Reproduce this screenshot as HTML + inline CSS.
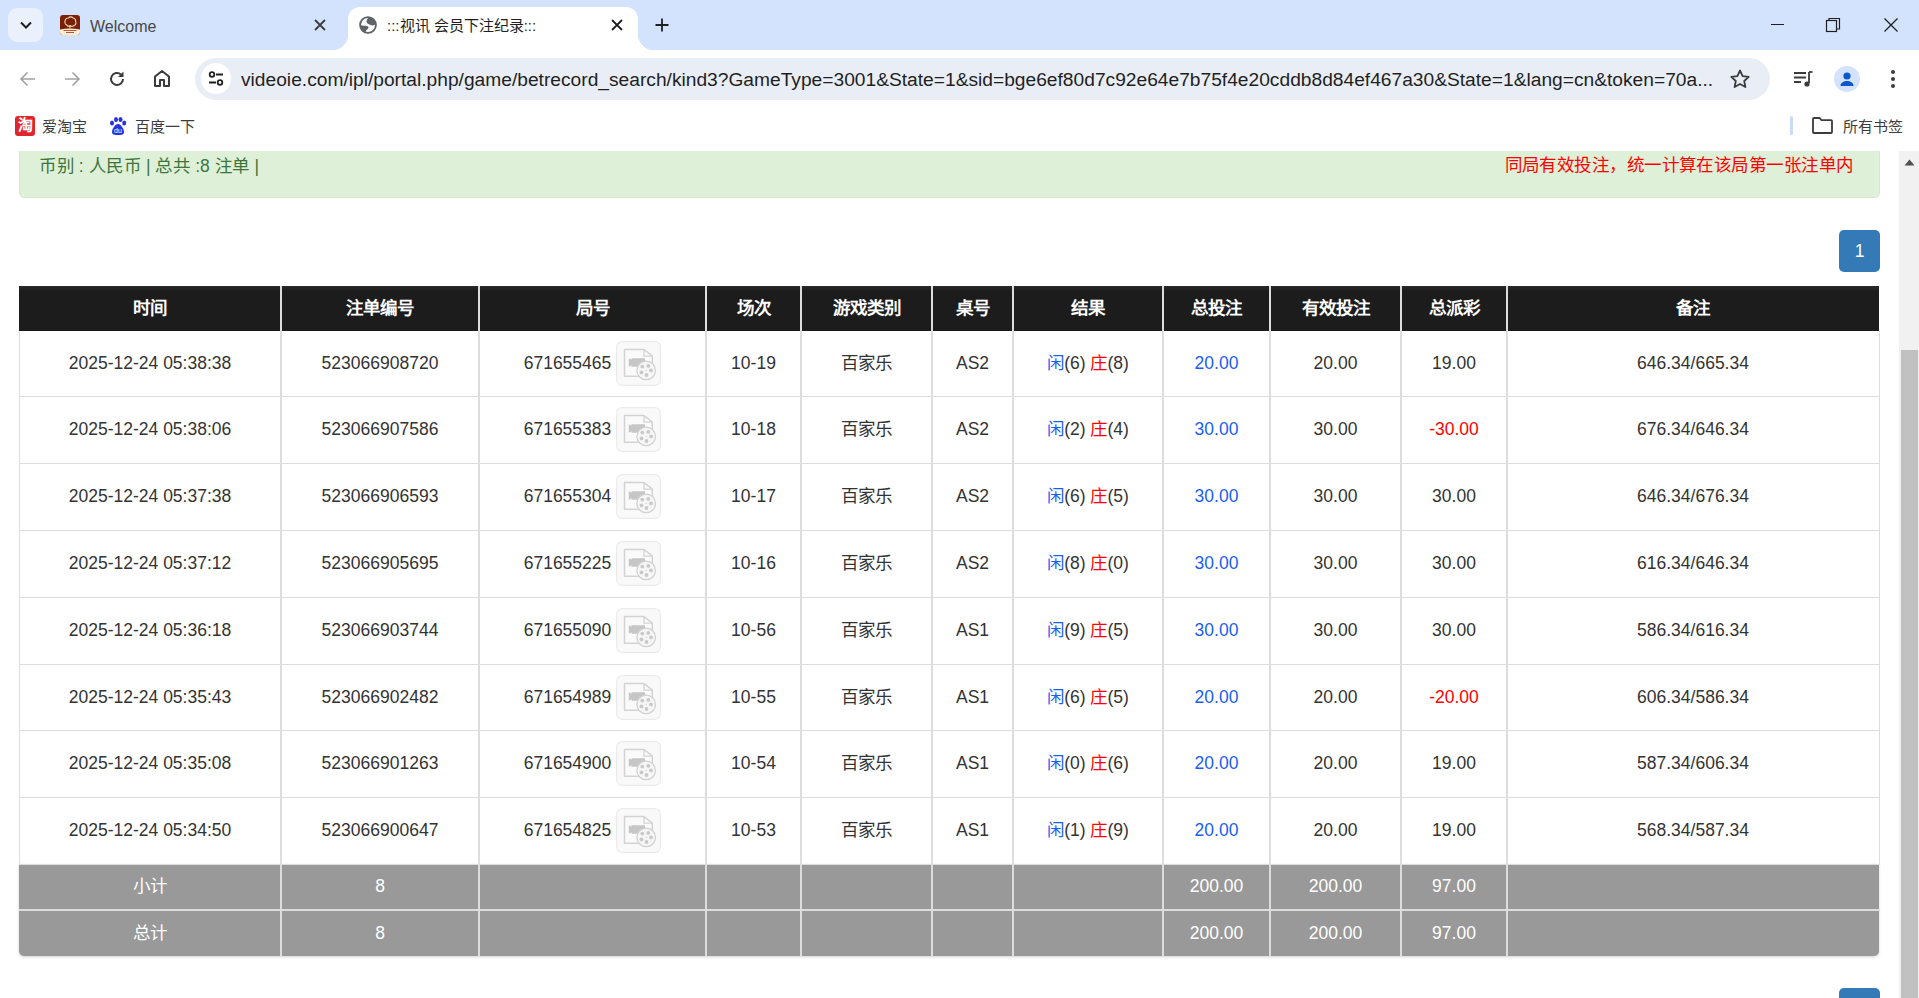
<!DOCTYPE html>
<html lang="zh-CN"><head><meta charset="utf-8"><title>:::视讯 会员下注纪录:::</title>
<style>
*{box-sizing:border-box;margin:0;padding:0}
html,body{text-spacing-trim:space-all;width:1919px;height:998px;overflow:hidden;background:#fff;font-family:"Liberation Sans",sans-serif;position:relative}
.a{position:absolute}
.tabstrip{left:0;top:0;width:1919px;height:50px;background:#d3e3fd}
.toolbar{left:0;top:50px;width:1919px;height:101px;background:#fff;border-top-left-radius:10px}
.omni{left:195px;top:58px;width:1575px;height:42px;border-radius:21px;background:#e9eef6}
.url{left:241px;top:68.5px;font-size:19.2px;color:#1f1f1f;white-space:nowrap;letter-spacing:0px}
.ttl{font-size:15px;color:#1f1f1f;white-space:nowrap}
.bm{font-size:15px;color:#1f1f1f;white-space:nowrap}
.cell{position:absolute;display:flex;line-height:25px;align-items:center;justify-content:center;font-size:17.5px;color:#333;white-space:nowrap}
.hd{color:#fff;font-weight:bold;background:linear-gradient(#2b2b2b,#1c1c1c 5px)}
.ft{color:#fff;background:#999}
.vb{position:absolute;width:2px;background:#ddd}
.hb{position:absolute;height:1px;background:#ddd}
.ico{display:inline-block;width:45px;height:45px;margin-left:5px;position:relative}
.ico svg{display:block}
.bl{color:#1a5ff0}.rd{color:#f00}
</style></head><body>

<div class="a tabstrip"></div>
<div class="a" style="left:8px;top:8px;width:35px;height:34px;border-radius:9px;background:#eaf1fd"></div>
<svg class="a" style="left:18px;top:18px" width="16" height="14" viewBox="0 0 16 14"><path d="M3 4.5L8 9.5L13 4.5" fill="none" stroke="#1f1f1f" stroke-width="2"/></svg>
<svg class="a" style="left:60px;top:15px" width="20" height="20" viewBox="0 0 20 20"><rect x="0" y="0" width="20" height="20" rx="3" fill="#7a1f08"/><path d="M0 14.5Q10 12.5 20 14.5V17a3 3 0 0 1-3 3H3a3 3 0 0 1-3-3z" fill="#fbeed0"/><path d="M5 6.5c0-2 1.5-3.5 3.5-3.5 1-1.5 3.5-1.5 4.5 0 2 .3 3 2 2.6 3.8.8 1.2.3 3-1.3 3.4-.8 1.2-2.6 1.5-3.6.6-1.2.7-3 .5-3.8-.7C5.7 9.7 4.6 8 5 6.5z" fill="none" stroke="#f3d9b8" stroke-width="1.1"/><path d="M10 10v3.5" stroke="#f3d9b8" stroke-width="1"/><path d="M3.5 15.5h13M6 17.5h8" stroke="#c0392b" stroke-width="0.9"/></svg>
<div class="a ttl" style="left:90px;top:18px;color:#474747;font-size:16px">Welcome</div>
<svg class="a" style="left:313px;top:18px" width="14" height="14" viewBox="0 0 14 14"><path d="M2 2L12 12M12 2L2 12" stroke="#3c3c3c" stroke-width="1.8"/></svg>
<div class="a" style="left:348px;top:7px;width:290px;height:50px;background:#fff;border-radius:12px 12px 0 0"></div>
<div class="a" style="left:332px;top:34px;width:16px;height:16px;background:radial-gradient(circle at 0 0,#d3e3fd 16px,#fff 16.5px)"></div>
<div class="a" style="left:638px;top:34px;width:16px;height:16px;background:radial-gradient(circle at 16px 0,#d3e3fd 16px,#fff 16.5px)"></div>
<svg class="a" style="left:359px;top:16px" width="18" height="18" viewBox="0 0 18 18"><circle cx="9" cy="9" r="7.9" fill="none" stroke="#5f6368" stroke-width="1.9"/><path d="M10.2 1.1C8.2 2.4 7.2 4.8 7.6 6.2C8 7.5 9.5 7.9 11 8.8C12.5 9.8 15 9.8 16.9 8.1A8 8 0 0 0 10.2 1.1Z" fill="#5f6368"/><path d="M1.1 9C3.5 9.8 7 9.5 8.6 10.3C9.8 11 9.9 12.3 8.5 13.2C7 14 6.5 15 6.6 16.8A8 8 0 0 1 1.1 9Z" fill="#5f6368"/></svg>
<div class="a ttl" style="left:387px;top:14px">:::视讯 会员下注纪录:::</div>
<svg class="a" style="left:610px;top:18px" width="14" height="14" viewBox="0 0 14 14"><path d="M2 2L12 12M12 2L2 12" stroke="#1f1f1f" stroke-width="1.8"/></svg>
<svg class="a" style="left:654px;top:17px" width="16" height="16" viewBox="0 0 16 16"><path d="M8 1.5V14.5M1.5 8H14.5" stroke="#1f1f1f" stroke-width="1.8"/></svg>
<div class="a" style="left:1771px;top:24px;width:13px;height:1px;background:#1f1f1f"></div>
<svg class="a" style="left:1825px;top:17px" width="16" height="16" viewBox="0 0 16 16"><rect x="1.5" y="3.5" width="10" height="11" fill="none" stroke="#1f1f1f" stroke-width="1.2"/><path d="M4 3.5V1.5H14.5V12H11.5" fill="none" stroke="#1f1f1f" stroke-width="1.2"/></svg>
<svg class="a" style="left:1883px;top:17px" width="16" height="16" viewBox="0 0 16 16"><path d="M1.5 1.5L14.5 14.5M14.5 1.5L1.5 14.5" stroke="#1f1f1f" stroke-width="1.3"/></svg>
<div class="a toolbar"></div>
<svg class="a" style="left:18px;top:69px" width="20" height="20" viewBox="0 0 20 20"><path d="M17 10H3.5M9.5 3.5L3 10l6.5 6.5" fill="none" stroke="#a3a3a3" stroke-width="1.6"/></svg>
<svg class="a" style="left:62px;top:69px" width="20" height="20" viewBox="0 0 20 20"><path d="M3 10H16.5M10.5 3.5L17 10l-6.5 6.5" fill="none" stroke="#a3a3a3" stroke-width="1.6"/></svg>
<svg class="a" style="left:107px;top:69px" width="20" height="20" viewBox="0 0 20 20"><path d="M16 10a6 6 0 1 1-2-4.5" fill="none" stroke="#3c3c3c" stroke-width="2"/><path d="M16.5 2.5v5.5h-5.5z" fill="#3c3c3c"/></svg>
<svg class="a" style="left:152px;top:68px" width="20" height="20" viewBox="0 0 20 20"><path d="M3 18V8.5L10 3l7 5.5V18h-5v-6H8v6z" fill="none" stroke="#3c3c3c" stroke-width="2" stroke-linejoin="round"/></svg>
<div class="a omni"></div>
<div class="a" style="left:201px;top:63px;width:30px;height:31px;border-radius:50%;background:#fff"></div>
<svg class="a" style="left:206px;top:69px" width="20" height="20" viewBox="0 0 20 20"><circle cx="6" cy="5.5" r="2.3" fill="none" stroke="#1f1f1f" stroke-width="1.8"/><path d="M10 5.5H17M3 13.5H10" stroke="#1f1f1f" stroke-width="1.8"/><circle cx="14" cy="13.5" r="2.3" fill="none" stroke="#1f1f1f" stroke-width="1.8"/></svg>
<div class="a url">videoie.com/ipl/portal.php/game/betrecord_search/kind3?GameType=3001&amp;State=1&amp;sid=bge6ef80d7c92e64e7b75f4e20cddb8d84ef467a30&amp;State=1&amp;lang=cn&amp;token=70a...</div>
<svg class="a" style="left:1729px;top:68px" width="22" height="22" viewBox="0 0 22 22"><path d="M11 2.5l2.6 5.6 6.1.7-4.5 4.2 1.2 6-5.4-3-5.4 3 1.2-6-4.5-4.2 6.1-.7z" fill="none" stroke="#3c3c3c" stroke-width="1.8" stroke-linejoin="round"/></svg>
<svg class="a" style="left:1792px;top:68px" width="22" height="22" viewBox="0 0 22 22"><path d="M2 5H14M2 9.5H14M2 14H9" stroke="#3c3c3c" stroke-width="1.8"/><path d="M17 4V15" stroke="#3c3c3c" stroke-width="1.8"/><path d="M17 4H20.5" stroke="#3c3c3c" stroke-width="1.8"/><circle cx="15" cy="16" r="2.6" fill="#3c3c3c"/></svg>
<div class="a" style="left:1834px;top:66px;width:26px;height:26px;border-radius:50%;background:#d3e3fd"></div>
<svg class="a" style="left:1838px;top:70px" width="18" height="18" viewBox="0 0 18 18"><circle cx="9" cy="6" r="3.6" fill="#0b57d0"/><path d="M2.5 16c0-3.3 3.3-5 6.5-5s6.5 1.7 6.5 5z" fill="#0b57d0"/></svg>
<svg class="a" style="left:1883px;top:68px" width="20" height="22" viewBox="0 0 20 22"><circle cx="10" cy="4" r="2" fill="#3c3c3c"/><circle cx="10" cy="11" r="2" fill="#3c3c3c"/><circle cx="10" cy="18" r="2" fill="#3c3c3c"/></svg>
<div class="a" style="left:15px;top:116px;width:20px;height:20px;border-radius:3px;background:#e0262c"></div>
<div class="a" style="left:15px;top:113px;width:20px;font-size:15px;color:#fff;font-weight:bold;text-align:center">淘</div>
<div class="a bm" style="left:42px;top:115px;color:#3c3c3c">爱淘宝</div>
<svg class="a" style="left:108px;top:116px" width="20" height="20" viewBox="0 0 20 20"><ellipse cx="4" cy="7" rx="2" ry="2.5" fill="#2932e1"/><ellipse cx="8" cy="3.5" rx="2" ry="2.5" fill="#2932e1"/><ellipse cx="12.5" cy="3.5" rx="2" ry="2.5" fill="#2932e1"/><ellipse cx="16.2" cy="7" rx="2" ry="2.5" fill="#2932e1"/><path d="M10 8c-3 0-6 5-6 8s3 3 6 3 6 0 6-3-3-8-6-8z" fill="#2932e1"/><text x="10" y="17" font-size="7" fill="#fff" text-anchor="middle" font-family="Liberation Sans">du</text></svg>
<div class="a bm" style="left:135px;top:115px;color:#3c3c3c">百度一下</div>
<div class="a" style="left:1790px;top:116px;width:3px;height:19px;border-radius:2px;background:#c9dafb"></div>
<svg class="a" style="left:1812px;top:117px" width="21" height="17" viewBox="0 0 21 17"><path d="M1 2a1 1 0 0 1 1-1h5.5l2 2.2h9.5a1 1 0 0 1 1 1V15a1 1 0 0 1-1 1H2a1 1 0 0 1-1-1z" fill="none" stroke="#3c3c3c" stroke-width="1.8"/></svg>
<div class="a bm" style="left:1843px;top:115px;color:#3c3c3c">所有书签</div>
<div class="a" style="left:0;top:151px;width:1899px;height:847px;overflow:hidden;background:#fff">
<div class="a" style="left:19px;top:-10px;width:1861px;height:57px;background:#dff0d8;border:1px solid #d6e9c6;border-radius:5px"></div>
<div class="a" style="left:39px;top:1px;font-size:17.5px;color:#3c763d;white-space:nowrap"><span style="letter-spacing:.5px">币别</span> : <span style="letter-spacing:.5px">人民币</span> | <span style="letter-spacing:.5px">总共</span> :8 <span style="letter-spacing:.5px">注单</span> |</div>
<div class="a" style="right:45.5px;top:0px;font-size:17.5px;color:#f00;white-space:nowrap;letter-spacing:0.45px">同局有效投注，统一计算在该局第一张注单内</div>
<div class="a" style="left:1839px;top:79px;width:41px;height:42px;border-radius:5px;background:#337ab7;color:#fff;font-size:17.5px;display:flex;align-items:center;justify-content:center">1</div>
<div class="a" style="left:1839px;top:837px;width:41px;height:42px;border-radius:5px;background:#337ab7"></div>
<div class="a" style="left:19px;top:713px;width:1860px;height:92px;border-radius:0 0 5px 5px;box-shadow:0 1px 3px rgba(0,0,0,.18);background:#999"></div>
<div class="cell hd" style="left:19px;top:135px;width:262px;height:45px"><span>时间</span></div>
<div class="cell hd" style="left:281px;top:135px;width:198px;height:45px"><span>注单编号</span></div>
<div class="cell hd" style="left:479px;top:135px;width:227px;height:45px"><span>局号</span></div>
<div class="cell hd" style="left:706px;top:135px;width:95px;height:45px"><span>场次</span></div>
<div class="cell hd" style="left:801px;top:135px;width:131px;height:45px"><span>游戏类别</span></div>
<div class="cell hd" style="left:932px;top:135px;width:81px;height:45px"><span>桌号</span></div>
<div class="cell hd" style="left:1013px;top:135px;width:150px;height:45px"><span>结果</span></div>
<div class="cell hd" style="left:1163px;top:135px;width:107px;height:45px"><span>总投注</span></div>
<div class="cell hd" style="left:1270px;top:135px;width:131px;height:45px"><span>有效投注</span></div>
<div class="cell hd" style="left:1401px;top:135px;width:106px;height:45px"><span>总派彩</span></div>
<div class="cell hd" style="left:1507px;top:135px;width:372px;height:45px"><span>备注</span></div>
<div class="cell" style="left:19px;top:180px;width:262px;height:65px"><span>2025-12-24 05:38:38</span></div>
<div class="cell" style="left:281px;top:180px;width:198px;height:65px"><span>523066908720</span></div>
<div class="cell" style="left:479px;top:180px;width:227px;height:65px"><span><span style="display:inline-flex;align-items:center">671655465<span class="ico"><svg width="45" height="45" viewBox="0 0 45 45"><rect x="0.6" y="0.6" width="43.8" height="43.8" rx="5.5" fill="#f9f9f9" stroke="#ececec" stroke-width="1.2"/><path d="M8.5 8.5H28L36.3 15.2V35.3H8.5Z" fill="#fafafa" stroke="#d3d3d3" stroke-width="1.5" stroke-linejoin="round"/><path d="M28 8.5V15.2H36.3" fill="none" stroke="#d3d3d3" stroke-width="1.3"/><path d="M12.8 17.3L15.5 18.8V17.3H29V25.7H15.5V24.2L12.8 25.7Z" fill="#c6c6c6"/><circle cx="30.2" cy="29.4" r="9.3" fill="#f6f6f6" stroke="#d2d2d2" stroke-width="1.3"/><circle cx="26.3" cy="25.6" r="1.9" fill="#c9c9c9"/><circle cx="32.3" cy="24.9" r="1.9" fill="#c9c9c9"/><circle cx="35" cy="29.4" r="1.9" fill="#c9c9c9"/><circle cx="25.5" cy="31.4" r="1.9" fill="#c9c9c9"/><circle cx="30.5" cy="34" r="1.9" fill="#c9c9c9"/><circle cx="30.2" cy="29.4" r="0.6" fill="#c9c9c9"/></svg></span></span></span></div>
<div class="cell" style="left:706px;top:180px;width:95px;height:65px"><span>10-19</span></div>
<div class="cell" style="left:801px;top:180px;width:131px;height:65px"><span>百家乐</span></div>
<div class="cell" style="left:932px;top:180px;width:81px;height:65px"><span>AS2</span></div>
<div class="cell" style="left:1013px;top:180px;width:150px;height:65px"><span><span class="bl">闲</span>(6) <span class="rd">庄</span>(8)</span></div>
<div class="cell" style="left:1163px;top:180px;width:107px;height:65px"><span><span class="bl">20.00</span></span></div>
<div class="cell" style="left:1270px;top:180px;width:131px;height:65px"><span>20.00</span></div>
<div class="cell" style="left:1401px;top:180px;width:106px;height:65px"><span>19.00</span></div>
<div class="cell" style="left:1507px;top:180px;width:372px;height:65px"><span>646.34/665.34</span></div>
<div class="hb" style="left:19px;top:245px;width:1861px"></div>
<div class="cell" style="left:19px;top:245px;width:262px;height:67px"><span>2025-12-24 05:38:06</span></div>
<div class="cell" style="left:281px;top:245px;width:198px;height:67px"><span>523066907586</span></div>
<div class="cell" style="left:479px;top:245px;width:227px;height:67px"><span><span style="display:inline-flex;align-items:center">671655383<span class="ico"><svg width="45" height="45" viewBox="0 0 45 45"><rect x="0.6" y="0.6" width="43.8" height="43.8" rx="5.5" fill="#f9f9f9" stroke="#ececec" stroke-width="1.2"/><path d="M8.5 8.5H28L36.3 15.2V35.3H8.5Z" fill="#fafafa" stroke="#d3d3d3" stroke-width="1.5" stroke-linejoin="round"/><path d="M28 8.5V15.2H36.3" fill="none" stroke="#d3d3d3" stroke-width="1.3"/><path d="M12.8 17.3L15.5 18.8V17.3H29V25.7H15.5V24.2L12.8 25.7Z" fill="#c6c6c6"/><circle cx="30.2" cy="29.4" r="9.3" fill="#f6f6f6" stroke="#d2d2d2" stroke-width="1.3"/><circle cx="26.3" cy="25.6" r="1.9" fill="#c9c9c9"/><circle cx="32.3" cy="24.9" r="1.9" fill="#c9c9c9"/><circle cx="35" cy="29.4" r="1.9" fill="#c9c9c9"/><circle cx="25.5" cy="31.4" r="1.9" fill="#c9c9c9"/><circle cx="30.5" cy="34" r="1.9" fill="#c9c9c9"/><circle cx="30.2" cy="29.4" r="0.6" fill="#c9c9c9"/></svg></span></span></span></div>
<div class="cell" style="left:706px;top:245px;width:95px;height:67px"><span>10-18</span></div>
<div class="cell" style="left:801px;top:245px;width:131px;height:67px"><span>百家乐</span></div>
<div class="cell" style="left:932px;top:245px;width:81px;height:67px"><span>AS2</span></div>
<div class="cell" style="left:1013px;top:245px;width:150px;height:67px"><span><span class="bl">闲</span>(2) <span class="rd">庄</span>(4)</span></div>
<div class="cell" style="left:1163px;top:245px;width:107px;height:67px"><span><span class="bl">30.00</span></span></div>
<div class="cell" style="left:1270px;top:245px;width:131px;height:67px"><span>30.00</span></div>
<div class="cell" style="left:1401px;top:245px;width:106px;height:67px"><span><span class="rd">-30.00</span></span></div>
<div class="cell" style="left:1507px;top:245px;width:372px;height:67px"><span>676.34/646.34</span></div>
<div class="hb" style="left:19px;top:312px;width:1861px"></div>
<div class="cell" style="left:19px;top:312px;width:262px;height:67px"><span>2025-12-24 05:37:38</span></div>
<div class="cell" style="left:281px;top:312px;width:198px;height:67px"><span>523066906593</span></div>
<div class="cell" style="left:479px;top:312px;width:227px;height:67px"><span><span style="display:inline-flex;align-items:center">671655304<span class="ico"><svg width="45" height="45" viewBox="0 0 45 45"><rect x="0.6" y="0.6" width="43.8" height="43.8" rx="5.5" fill="#f9f9f9" stroke="#ececec" stroke-width="1.2"/><path d="M8.5 8.5H28L36.3 15.2V35.3H8.5Z" fill="#fafafa" stroke="#d3d3d3" stroke-width="1.5" stroke-linejoin="round"/><path d="M28 8.5V15.2H36.3" fill="none" stroke="#d3d3d3" stroke-width="1.3"/><path d="M12.8 17.3L15.5 18.8V17.3H29V25.7H15.5V24.2L12.8 25.7Z" fill="#c6c6c6"/><circle cx="30.2" cy="29.4" r="9.3" fill="#f6f6f6" stroke="#d2d2d2" stroke-width="1.3"/><circle cx="26.3" cy="25.6" r="1.9" fill="#c9c9c9"/><circle cx="32.3" cy="24.9" r="1.9" fill="#c9c9c9"/><circle cx="35" cy="29.4" r="1.9" fill="#c9c9c9"/><circle cx="25.5" cy="31.4" r="1.9" fill="#c9c9c9"/><circle cx="30.5" cy="34" r="1.9" fill="#c9c9c9"/><circle cx="30.2" cy="29.4" r="0.6" fill="#c9c9c9"/></svg></span></span></span></div>
<div class="cell" style="left:706px;top:312px;width:95px;height:67px"><span>10-17</span></div>
<div class="cell" style="left:801px;top:312px;width:131px;height:67px"><span>百家乐</span></div>
<div class="cell" style="left:932px;top:312px;width:81px;height:67px"><span>AS2</span></div>
<div class="cell" style="left:1013px;top:312px;width:150px;height:67px"><span><span class="bl">闲</span>(6) <span class="rd">庄</span>(5)</span></div>
<div class="cell" style="left:1163px;top:312px;width:107px;height:67px"><span><span class="bl">30.00</span></span></div>
<div class="cell" style="left:1270px;top:312px;width:131px;height:67px"><span>30.00</span></div>
<div class="cell" style="left:1401px;top:312px;width:106px;height:67px"><span>30.00</span></div>
<div class="cell" style="left:1507px;top:312px;width:372px;height:67px"><span>646.34/676.34</span></div>
<div class="hb" style="left:19px;top:379px;width:1861px"></div>
<div class="cell" style="left:19px;top:379px;width:262px;height:67px"><span>2025-12-24 05:37:12</span></div>
<div class="cell" style="left:281px;top:379px;width:198px;height:67px"><span>523066905695</span></div>
<div class="cell" style="left:479px;top:379px;width:227px;height:67px"><span><span style="display:inline-flex;align-items:center">671655225<span class="ico"><svg width="45" height="45" viewBox="0 0 45 45"><rect x="0.6" y="0.6" width="43.8" height="43.8" rx="5.5" fill="#f9f9f9" stroke="#ececec" stroke-width="1.2"/><path d="M8.5 8.5H28L36.3 15.2V35.3H8.5Z" fill="#fafafa" stroke="#d3d3d3" stroke-width="1.5" stroke-linejoin="round"/><path d="M28 8.5V15.2H36.3" fill="none" stroke="#d3d3d3" stroke-width="1.3"/><path d="M12.8 17.3L15.5 18.8V17.3H29V25.7H15.5V24.2L12.8 25.7Z" fill="#c6c6c6"/><circle cx="30.2" cy="29.4" r="9.3" fill="#f6f6f6" stroke="#d2d2d2" stroke-width="1.3"/><circle cx="26.3" cy="25.6" r="1.9" fill="#c9c9c9"/><circle cx="32.3" cy="24.9" r="1.9" fill="#c9c9c9"/><circle cx="35" cy="29.4" r="1.9" fill="#c9c9c9"/><circle cx="25.5" cy="31.4" r="1.9" fill="#c9c9c9"/><circle cx="30.5" cy="34" r="1.9" fill="#c9c9c9"/><circle cx="30.2" cy="29.4" r="0.6" fill="#c9c9c9"/></svg></span></span></span></div>
<div class="cell" style="left:706px;top:379px;width:95px;height:67px"><span>10-16</span></div>
<div class="cell" style="left:801px;top:379px;width:131px;height:67px"><span>百家乐</span></div>
<div class="cell" style="left:932px;top:379px;width:81px;height:67px"><span>AS2</span></div>
<div class="cell" style="left:1013px;top:379px;width:150px;height:67px"><span><span class="bl">闲</span>(8) <span class="rd">庄</span>(0)</span></div>
<div class="cell" style="left:1163px;top:379px;width:107px;height:67px"><span><span class="bl">30.00</span></span></div>
<div class="cell" style="left:1270px;top:379px;width:131px;height:67px"><span>30.00</span></div>
<div class="cell" style="left:1401px;top:379px;width:106px;height:67px"><span>30.00</span></div>
<div class="cell" style="left:1507px;top:379px;width:372px;height:67px"><span>616.34/646.34</span></div>
<div class="hb" style="left:19px;top:446px;width:1861px"></div>
<div class="cell" style="left:19px;top:446px;width:262px;height:67px"><span>2025-12-24 05:36:18</span></div>
<div class="cell" style="left:281px;top:446px;width:198px;height:67px"><span>523066903744</span></div>
<div class="cell" style="left:479px;top:446px;width:227px;height:67px"><span><span style="display:inline-flex;align-items:center">671655090<span class="ico"><svg width="45" height="45" viewBox="0 0 45 45"><rect x="0.6" y="0.6" width="43.8" height="43.8" rx="5.5" fill="#f9f9f9" stroke="#ececec" stroke-width="1.2"/><path d="M8.5 8.5H28L36.3 15.2V35.3H8.5Z" fill="#fafafa" stroke="#d3d3d3" stroke-width="1.5" stroke-linejoin="round"/><path d="M28 8.5V15.2H36.3" fill="none" stroke="#d3d3d3" stroke-width="1.3"/><path d="M12.8 17.3L15.5 18.8V17.3H29V25.7H15.5V24.2L12.8 25.7Z" fill="#c6c6c6"/><circle cx="30.2" cy="29.4" r="9.3" fill="#f6f6f6" stroke="#d2d2d2" stroke-width="1.3"/><circle cx="26.3" cy="25.6" r="1.9" fill="#c9c9c9"/><circle cx="32.3" cy="24.9" r="1.9" fill="#c9c9c9"/><circle cx="35" cy="29.4" r="1.9" fill="#c9c9c9"/><circle cx="25.5" cy="31.4" r="1.9" fill="#c9c9c9"/><circle cx="30.5" cy="34" r="1.9" fill="#c9c9c9"/><circle cx="30.2" cy="29.4" r="0.6" fill="#c9c9c9"/></svg></span></span></span></div>
<div class="cell" style="left:706px;top:446px;width:95px;height:67px"><span>10-56</span></div>
<div class="cell" style="left:801px;top:446px;width:131px;height:67px"><span>百家乐</span></div>
<div class="cell" style="left:932px;top:446px;width:81px;height:67px"><span>AS1</span></div>
<div class="cell" style="left:1013px;top:446px;width:150px;height:67px"><span><span class="bl">闲</span>(9) <span class="rd">庄</span>(5)</span></div>
<div class="cell" style="left:1163px;top:446px;width:107px;height:67px"><span><span class="bl">30.00</span></span></div>
<div class="cell" style="left:1270px;top:446px;width:131px;height:67px"><span>30.00</span></div>
<div class="cell" style="left:1401px;top:446px;width:106px;height:67px"><span>30.00</span></div>
<div class="cell" style="left:1507px;top:446px;width:372px;height:67px"><span>586.34/616.34</span></div>
<div class="hb" style="left:19px;top:513px;width:1861px"></div>
<div class="cell" style="left:19px;top:513px;width:262px;height:66px"><span>2025-12-24 05:35:43</span></div>
<div class="cell" style="left:281px;top:513px;width:198px;height:66px"><span>523066902482</span></div>
<div class="cell" style="left:479px;top:513px;width:227px;height:66px"><span><span style="display:inline-flex;align-items:center">671654989<span class="ico"><svg width="45" height="45" viewBox="0 0 45 45"><rect x="0.6" y="0.6" width="43.8" height="43.8" rx="5.5" fill="#f9f9f9" stroke="#ececec" stroke-width="1.2"/><path d="M8.5 8.5H28L36.3 15.2V35.3H8.5Z" fill="#fafafa" stroke="#d3d3d3" stroke-width="1.5" stroke-linejoin="round"/><path d="M28 8.5V15.2H36.3" fill="none" stroke="#d3d3d3" stroke-width="1.3"/><path d="M12.8 17.3L15.5 18.8V17.3H29V25.7H15.5V24.2L12.8 25.7Z" fill="#c6c6c6"/><circle cx="30.2" cy="29.4" r="9.3" fill="#f6f6f6" stroke="#d2d2d2" stroke-width="1.3"/><circle cx="26.3" cy="25.6" r="1.9" fill="#c9c9c9"/><circle cx="32.3" cy="24.9" r="1.9" fill="#c9c9c9"/><circle cx="35" cy="29.4" r="1.9" fill="#c9c9c9"/><circle cx="25.5" cy="31.4" r="1.9" fill="#c9c9c9"/><circle cx="30.5" cy="34" r="1.9" fill="#c9c9c9"/><circle cx="30.2" cy="29.4" r="0.6" fill="#c9c9c9"/></svg></span></span></span></div>
<div class="cell" style="left:706px;top:513px;width:95px;height:66px"><span>10-55</span></div>
<div class="cell" style="left:801px;top:513px;width:131px;height:66px"><span>百家乐</span></div>
<div class="cell" style="left:932px;top:513px;width:81px;height:66px"><span>AS1</span></div>
<div class="cell" style="left:1013px;top:513px;width:150px;height:66px"><span><span class="bl">闲</span>(6) <span class="rd">庄</span>(5)</span></div>
<div class="cell" style="left:1163px;top:513px;width:107px;height:66px"><span><span class="bl">20.00</span></span></div>
<div class="cell" style="left:1270px;top:513px;width:131px;height:66px"><span>20.00</span></div>
<div class="cell" style="left:1401px;top:513px;width:106px;height:66px"><span><span class="rd">-20.00</span></span></div>
<div class="cell" style="left:1507px;top:513px;width:372px;height:66px"><span>606.34/586.34</span></div>
<div class="hb" style="left:19px;top:579px;width:1861px"></div>
<div class="cell" style="left:19px;top:579px;width:262px;height:67px"><span>2025-12-24 05:35:08</span></div>
<div class="cell" style="left:281px;top:579px;width:198px;height:67px"><span>523066901263</span></div>
<div class="cell" style="left:479px;top:579px;width:227px;height:67px"><span><span style="display:inline-flex;align-items:center">671654900<span class="ico"><svg width="45" height="45" viewBox="0 0 45 45"><rect x="0.6" y="0.6" width="43.8" height="43.8" rx="5.5" fill="#f9f9f9" stroke="#ececec" stroke-width="1.2"/><path d="M8.5 8.5H28L36.3 15.2V35.3H8.5Z" fill="#fafafa" stroke="#d3d3d3" stroke-width="1.5" stroke-linejoin="round"/><path d="M28 8.5V15.2H36.3" fill="none" stroke="#d3d3d3" stroke-width="1.3"/><path d="M12.8 17.3L15.5 18.8V17.3H29V25.7H15.5V24.2L12.8 25.7Z" fill="#c6c6c6"/><circle cx="30.2" cy="29.4" r="9.3" fill="#f6f6f6" stroke="#d2d2d2" stroke-width="1.3"/><circle cx="26.3" cy="25.6" r="1.9" fill="#c9c9c9"/><circle cx="32.3" cy="24.9" r="1.9" fill="#c9c9c9"/><circle cx="35" cy="29.4" r="1.9" fill="#c9c9c9"/><circle cx="25.5" cy="31.4" r="1.9" fill="#c9c9c9"/><circle cx="30.5" cy="34" r="1.9" fill="#c9c9c9"/><circle cx="30.2" cy="29.4" r="0.6" fill="#c9c9c9"/></svg></span></span></span></div>
<div class="cell" style="left:706px;top:579px;width:95px;height:67px"><span>10-54</span></div>
<div class="cell" style="left:801px;top:579px;width:131px;height:67px"><span>百家乐</span></div>
<div class="cell" style="left:932px;top:579px;width:81px;height:67px"><span>AS1</span></div>
<div class="cell" style="left:1013px;top:579px;width:150px;height:67px"><span><span class="bl">闲</span>(0) <span class="rd">庄</span>(6)</span></div>
<div class="cell" style="left:1163px;top:579px;width:107px;height:67px"><span><span class="bl">20.00</span></span></div>
<div class="cell" style="left:1270px;top:579px;width:131px;height:67px"><span>20.00</span></div>
<div class="cell" style="left:1401px;top:579px;width:106px;height:67px"><span>19.00</span></div>
<div class="cell" style="left:1507px;top:579px;width:372px;height:67px"><span>587.34/606.34</span></div>
<div class="hb" style="left:19px;top:646px;width:1861px"></div>
<div class="cell" style="left:19px;top:646px;width:262px;height:67px"><span>2025-12-24 05:34:50</span></div>
<div class="cell" style="left:281px;top:646px;width:198px;height:67px"><span>523066900647</span></div>
<div class="cell" style="left:479px;top:646px;width:227px;height:67px"><span><span style="display:inline-flex;align-items:center">671654825<span class="ico"><svg width="45" height="45" viewBox="0 0 45 45"><rect x="0.6" y="0.6" width="43.8" height="43.8" rx="5.5" fill="#f9f9f9" stroke="#ececec" stroke-width="1.2"/><path d="M8.5 8.5H28L36.3 15.2V35.3H8.5Z" fill="#fafafa" stroke="#d3d3d3" stroke-width="1.5" stroke-linejoin="round"/><path d="M28 8.5V15.2H36.3" fill="none" stroke="#d3d3d3" stroke-width="1.3"/><path d="M12.8 17.3L15.5 18.8V17.3H29V25.7H15.5V24.2L12.8 25.7Z" fill="#c6c6c6"/><circle cx="30.2" cy="29.4" r="9.3" fill="#f6f6f6" stroke="#d2d2d2" stroke-width="1.3"/><circle cx="26.3" cy="25.6" r="1.9" fill="#c9c9c9"/><circle cx="32.3" cy="24.9" r="1.9" fill="#c9c9c9"/><circle cx="35" cy="29.4" r="1.9" fill="#c9c9c9"/><circle cx="25.5" cy="31.4" r="1.9" fill="#c9c9c9"/><circle cx="30.5" cy="34" r="1.9" fill="#c9c9c9"/><circle cx="30.2" cy="29.4" r="0.6" fill="#c9c9c9"/></svg></span></span></span></div>
<div class="cell" style="left:706px;top:646px;width:95px;height:67px"><span>10-53</span></div>
<div class="cell" style="left:801px;top:646px;width:131px;height:67px"><span>百家乐</span></div>
<div class="cell" style="left:932px;top:646px;width:81px;height:67px"><span>AS1</span></div>
<div class="cell" style="left:1013px;top:646px;width:150px;height:67px"><span><span class="bl">闲</span>(1) <span class="rd">庄</span>(9)</span></div>
<div class="cell" style="left:1163px;top:646px;width:107px;height:67px"><span><span class="bl">20.00</span></span></div>
<div class="cell" style="left:1270px;top:646px;width:131px;height:67px"><span>20.00</span></div>
<div class="cell" style="left:1401px;top:646px;width:106px;height:67px"><span>19.00</span></div>
<div class="cell" style="left:1507px;top:646px;width:372px;height:67px"><span>568.34/587.34</span></div>
<div class="hb" style="left:19px;top:713px;width:1861px"></div>
<div class="cell ft" style="left:19px;top:713px;width:262px;height:45px;background:none">小计</div>
<div class="cell ft" style="left:281px;top:713px;width:198px;height:45px;background:none">8</div>
<div class="cell ft" style="left:479px;top:713px;width:227px;height:45px;background:none"></div>
<div class="cell ft" style="left:706px;top:713px;width:95px;height:45px;background:none"></div>
<div class="cell ft" style="left:801px;top:713px;width:131px;height:45px;background:none"></div>
<div class="cell ft" style="left:932px;top:713px;width:81px;height:45px;background:none"></div>
<div class="cell ft" style="left:1013px;top:713px;width:150px;height:45px;background:none"></div>
<div class="cell ft" style="left:1163px;top:713px;width:107px;height:45px;background:none">200.00</div>
<div class="cell ft" style="left:1270px;top:713px;width:131px;height:45px;background:none">200.00</div>
<div class="cell ft" style="left:1401px;top:713px;width:106px;height:45px;background:none">97.00</div>
<div class="cell ft" style="left:1507px;top:713px;width:372px;height:45px;background:none"></div>
<div class="cell ft" style="left:19px;top:760px;width:262px;height:45px;background:none">总计</div>
<div class="cell ft" style="left:281px;top:760px;width:198px;height:45px;background:none">8</div>
<div class="cell ft" style="left:479px;top:760px;width:227px;height:45px;background:none"></div>
<div class="cell ft" style="left:706px;top:760px;width:95px;height:45px;background:none"></div>
<div class="cell ft" style="left:801px;top:760px;width:131px;height:45px;background:none"></div>
<div class="cell ft" style="left:932px;top:760px;width:81px;height:45px;background:none"></div>
<div class="cell ft" style="left:1013px;top:760px;width:150px;height:45px;background:none"></div>
<div class="cell ft" style="left:1163px;top:760px;width:107px;height:45px;background:none">200.00</div>
<div class="cell ft" style="left:1270px;top:760px;width:131px;height:45px;background:none">200.00</div>
<div class="cell ft" style="left:1401px;top:760px;width:106px;height:45px;background:none">97.00</div>
<div class="cell ft" style="left:1507px;top:760px;width:372px;height:45px;background:none"></div>
<div class="a" style="left:19px;top:758px;width:1861px;height:2px;background:#ddd"></div>
<div class="vb" style="left:280px;top:135px;height:670px"></div>
<div class="vb" style="left:478px;top:135px;height:670px"></div>
<div class="vb" style="left:705px;top:135px;height:670px"></div>
<div class="vb" style="left:800px;top:135px;height:670px"></div>
<div class="vb" style="left:931px;top:135px;height:670px"></div>
<div class="vb" style="left:1012px;top:135px;height:670px"></div>
<div class="vb" style="left:1162px;top:135px;height:670px"></div>
<div class="vb" style="left:1269px;top:135px;height:670px"></div>
<div class="vb" style="left:1400px;top:135px;height:670px"></div>
<div class="vb" style="left:1506px;top:135px;height:670px"></div>
<div class="a" style="left:19px;top:180px;width:1px;height:533px;background:#ddd"></div>
<div class="a" style="left:1879px;top:180px;width:1px;height:533px;background:#ddd"></div>
</div>
<div class="a" style="left:1899px;top:151px;width:20px;height:847px;background:#f1f1f1"></div>
<svg class="a" style="left:1904px;top:158px" width="11" height="8" viewBox="0 0 11 8"><path d="M0.5 7.5L5.5 1.5L10.5 7.5z" fill="#505050"/></svg>
<div class="a" style="left:1901px;top:350px;width:17px;height:648px;background:#c1c1c1"></div>
</body></html>
